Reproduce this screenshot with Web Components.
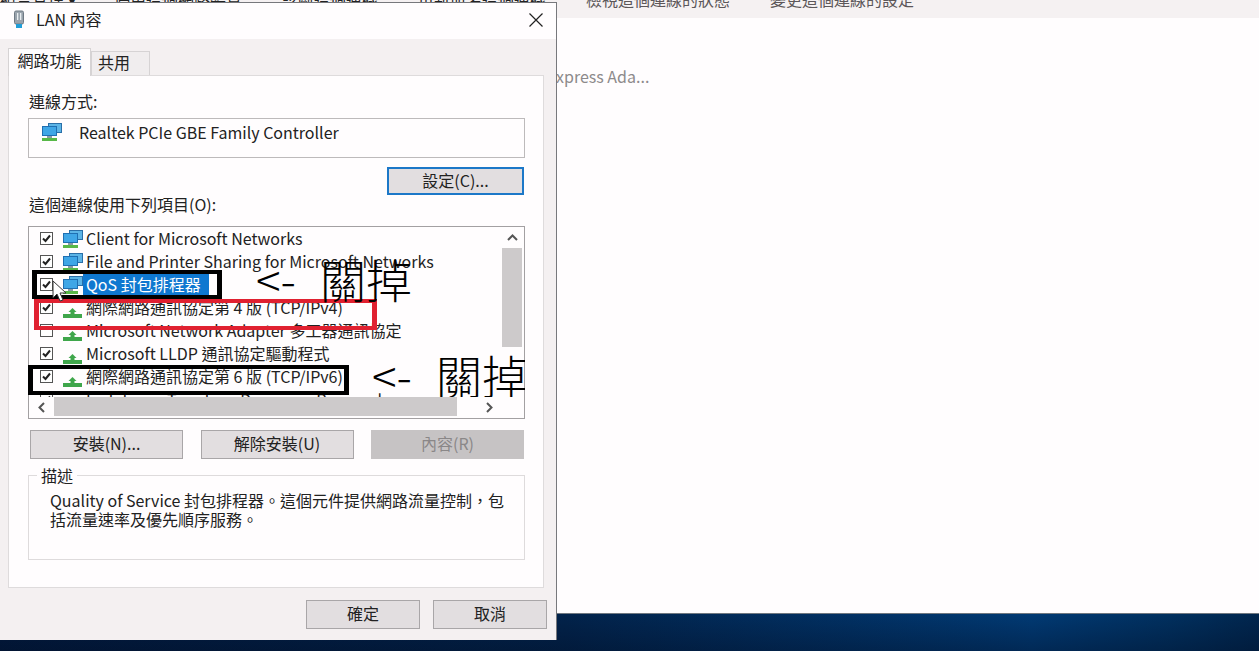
<!DOCTYPE html>
<html lang="zh-Hant">
<head>
<meta charset="utf-8">
<title>LAN 內容</title>
<style>
  html, body { margin: 0; height: 100%; overflow: hidden; background: #fffdfe; }
</style>
</head>
<body>
<net-desktop>
  <net-dialog slot="dialog"></net-dialog>
</net-desktop>
<script>
const FONT = `"Noto Sans CJK TC", "Open Sans", "Noto Sans", sans-serif`;

const monitorIcon = `<svg width="22" height="20" viewBox="0 0 22 20">
  <rect x="7" y="1" width="14" height="10" fill="#2a6fa8"/><rect x="8" y="2" width="12" height="8" fill="#5cb4e6"/>
  <rect x="1" y="4" width="15" height="10" fill="#1f6fb2"/><rect x="2" y="5" width="13" height="8" fill="#3fa6e6"/>
  <rect x="6" y="14" width="5" height="2" fill="#8a9aa5"/><rect x="1" y="16" width="15" height="3" fill="#58b848"/></svg>`;
const protoIcon = `<svg width="22" height="20" viewBox="0 0 22 20">
  <path d="M10.5 10L14.5 14H12.5V16H20V20H1V16H8.5V14H6.5Z" fill="#3fa64b"/></svg>`;

class NetDesktop extends HTMLElement {
  constructor() {
    super();
    this.shadowDOM = this.attachShadow({ mode: "open" });
    this.shadowDOM.innerHTML = `
      <style>
        :host { display: flex; flex-direction: column; width: 1259px; height: 651px; position: relative; overflow: hidden; font-family: ${FONT}; }
        .top { height: 18px; background: #f5f1f2; display: flex; gap: 40px; font-size: 16px; line-height: 16px; color: #5c5759; white-space: nowrap; }
        .top span { margin-top: -9px; }
        .top .left { color: #222; }
        .top .org { width: 74px; }
        .main { flex: 1; background: #fffdfe; padding: 47px 0 0 556px; font-size: 16px; line-height: 22px; color: #8d8a8b; }
        .task { height: 38px; box-sizing: border-box; border-top: 1px solid #6f7780;
          background: linear-gradient(180deg, rgba(0,0,0,0), rgba(0,10,30,.35)), linear-gradient(90deg, #021a3e 0, #02234b 45%, #013a74 82%, #01305f 93%, #01264e 100%); }
        ::slotted(net-dialog) { position: absolute; left: 0; top: 2px; }
      </style>
      <div class="top">
        <span class="left org">組合管理 ▾</span><span class="left">停用這個網路裝置</span><span class="left">診斷這個連線</span><span class="left">重新命名這個連線</span>
        <span>檢視這個連線的狀態</span><span>變更這個連線的設定</span>
      </div>
      <div class="main">xpress Ada...</div>
      <div class="task"></div>
      <slot name="dialog"></slot>`;
  }
}

class NetButton extends HTMLElement {
  constructor() {
    super();
    this.shadowDOM = this.attachShadow({ mode: "open" });
    this.shadowDOM.innerHTML = `
      <style>
        :host { display: flex; align-items: center; justify-content: center; box-sizing: border-box; height: 29px; padding-bottom: 3px; background: #e2dee0; border: 1px solid #a9a6a8; font-size: 16px; color: #222; }
        :host([focused]) { border: 2px solid #1c78c8; height: 28px; }
        :host([disabled]) { background: #c6c3c4; border-color: #c6c3c4; color: #8a8788; }
      </style><slot></slot>`;
  }
}

class NetList extends HTMLElement {
  constructor() {
    super();
    this.shadowDOM = this.attachShadow({ mode: "open" });
    const rows = [
      ["Client for Microsoft Networks", 1, monitorIcon],
      ["File and Printer Sharing for Microsoft Networks", 1, monitorIcon],
      ["QoS 封包排程器", 1, monitorIcon, 1],
      ["網際網路通訊協定第 4 版 (TCP/IPv4)", 1, protoIcon],
      ["Microsoft Network Adapter 多工器通訊協定", 0, protoIcon],
      ["Microsoft LLDP 通訊協定驅動程式", 1, protoIcon],
      ["網際網路通訊協定第 6 版 (TCP/IPv6)", 1, protoIcon],
      ["Link-Layer Topology Discovery Responder", 1, protoIcon],
    ];
    this.shadowDOM.innerHTML = `
      <style>
        :host { display: grid; grid-template-columns: 473px 22px; grid-template-rows: 170px 21px; box-sizing: border-box; height: 193px; border: 1px solid #a3a0a2; background: #fffdfe; font-size: 16px; color: #222; overflow: hidden; }
        .rows { padding-left: 11px; overflow: hidden; }
        .row { display: flex; align-items: center; height: 23px; white-space: nowrap; }
        .box { box-sizing: border-box; width: 13px; height: 13px; border: 1px solid #555; margin-right: 9px; flex: none; display: flex; background: #fff; }
        .row svg { flex: none; }
        .label { margin-left: -1px; padding: 0 8px 2px 3px; line-height: 20px; }
        .sel { background: #0f78d0; color: #fff; }
        .v { display: flex; flex-direction: column; width: 20px; }
        .v .arrow { height: 21px; }
        .thumb { background: #cdcacb; }
        .v .thumb { height: 99px; }
        .h { display: flex; }
        .h .arrow { width: 25px; }
        .h .thumb { width: 403px; margin-bottom: 2px; }
        .h .rest { flex: 1; }
        .arrow { display: flex; align-items: center; justify-content: center; }
      </style>
      <div class="rows">
        ${rows.map(([text, on, icon, sel]) => `
          <div class="row">
            <span class="box">${on ? `<svg width="11" height="11" viewBox="0 0 11 11"><path d="M2 5.5l2.5 2.5L9 2.5" fill="none" stroke="#222" stroke-width="2"/></svg>` : ""}</span>
            ${icon}
            <span class="label ${sel ? "sel" : ""}">${text}</span>
          </div>`).join("")}
      </div>
      <div class="v">
        <div class="arrow"><svg width="11" height="7" viewBox="0 0 11 7"><path d="M1 6l4.5-4.5L10 6" fill="none" stroke="#555" stroke-width="2"/></svg></div>
        <div class="thumb"></div>
      </div>
      <div class="h">
        <div class="arrow"><svg width="7" height="11" viewBox="0 0 7 11"><path d="M6 1L1.5 5.5 6 10" fill="none" stroke="#555" stroke-width="2"/></svg></div>
        <div class="thumb"></div>
        <div class="rest"></div>
        <div class="arrow"><svg width="7" height="11" viewBox="0 0 7 11"><path d="M1 1l4.5 4.5L1 10" fill="none" stroke="#555" stroke-width="2"/></svg></div>
      </div>
      <div></div>`;
  }
}

class NetDialog extends HTMLElement {
  constructor() {
    super();
    this.shadowDOM = this.attachShadow({ mode: "open" });
    this.shadowDOM.innerHTML = `
      <style>
        :host { display: flex; flex-direction: column; box-sizing: border-box; width: 557px; height: 638px; background: #f4f0f1; border-right: 1px solid #77787c; border-top: 1px solid #77787c; font-size: 16px; color: #222; position: relative; }
        .title { height: 36px; box-sizing: border-box; background: #fffdfe; display: flex; align-items: center; padding: 0 13px 2px 12px; font-size: 16px; }
        .title svg.plug { margin-right: 10px; }
        .title .name { flex: 1; margin-top: -2px; }
        .tabs { display: flex; align-items: flex-end; height: 36px; padding-left: 8px; box-sizing: border-box; }
        .tab { box-sizing: border-box; border: 1px solid #d6d3d4; border-bottom: none; display: flex; align-items: center; }
        .tab.on { width: 83px; height: 28px; background: #fffdfe; position: relative; top: 1px; z-index: 1; justify-content: center; padding-bottom: 5px; }
        .tab.off { width: 59px; height: 24px; background: #f0edee; padding: 0 0 3px 6px; }
        .page { box-sizing: border-box; width: 536px; height: 513px; margin-left: 8px; background: #fffdfe; border: 1px solid #dedbdc; padding: 16px 18px 0 19px; display: flex; flex-direction: column; }
        .lbl { line-height: 20px; margin: -1px 0 1px 1px; }
        .conn { box-sizing: border-box; height: 40px; margin-top: 6px; border: 1px solid #bdbabb; display: flex; align-items: flex-start; padding: 3px 0 0 12px; gap: 16px; line-height: 20px; }
        .config { align-self: flex-end; width: 137px; margin: 9px 1px 0 0; }
        net-list { margin-top: 11px; }
        .btns { display: grid; grid-template-columns: repeat(3, 153px); justify-content: space-between; margin-top: 11px; padding: 0 1px 0 2px; }
        fieldset { margin: 8px 0 0; padding: 8px 0 0 21px; height: 83px; border: 1px solid #dedbdc; line-height: 19px; white-space: nowrap; }
        legend { padding: 0 4px; margin-left: -13px; line-height: 16px; }
        .foot { display: flex; justify-content: flex-end; gap: 13px; padding: 12px 9px 0 0; }
        .foot net-button { width: 114px; }
        .cursor { position: absolute; left: 52px; top: 277px; }
      </style>
      <div class="title">
        <svg class="plug" width="14" height="20" viewBox="0 0 14 20"><rect x="2.5" y="1" width="9" height="13" rx="1.5" fill="#9aa4ad" stroke="#6f7a84"/><rect x="5" y="3" width="1.3" height="7" fill="#e9eef1"/><rect x="8" y="3" width="1.3" height="7" fill="#e9eef1"/><path d="M4 14h6v4H4z" fill="#1f9ed8"/></svg>
        <span class="name">LAN 內容</span>
        <svg width="14" height="14" viewBox="0 0 14 14"><path d="M.5.5l13 13M13.5.5l-13 13" stroke="#222" stroke-width="1.2" fill="none"/></svg>
      </div>
      <div class="tabs"><div class="tab on">網路功能</div><div class="tab off">共用</div></div>
      <div class="page">
        <div class="lbl">連線方式:</div>
        <div class="conn">${monitorIcon}<span>Realtek PCIe GBE Family Controller</span></div>
        <net-button class="config" focused>設定(C)...</net-button>
        <div class="lbl">這個連線使用下列項目(O):</div>
        <net-list></net-list>
        <div class="btns">
          <net-button>安裝(N)...</net-button>
          <net-button>解除安裝(U)</net-button>
          <net-button disabled>內容(R)</net-button>
        </div>
        <fieldset><legend>描述</legend>Quality of Service 封包排程器。這個元件提供網路流量控制，包<br>括流量速率及優先順序服務。</fieldset>
      </div>
      <div class="foot"><net-button>確定</net-button><net-button>取消</net-button></div>
      <net-note style="left:32px;top:267px;width:190px;height:29px"></net-note>
      <net-note color="#e02030" style="left:34px;top:296px;width:343px;height:31px"></net-note>
      <net-note style="left:28px;top:362px;width:321px;height:30px"></net-note>
      <net-label style="left:256px;top:249px">&lt;- 關掉</net-label>
      <net-label style="left:372px;top:345px;width:153px;height:49px;overflow:hidden">&lt;- 關掉</net-label>
      <svg class="cursor" width="18" height="24" viewBox="0 0 18 24"><path d="M1 1v17l4-4 3 7 3-1-3-7h6z" fill="#fff" stroke="#333"/></svg>`;
  }
}

// annotation rectangle drawn over the dialog
class NetNote extends HTMLElement {
  constructor() {
    super();
    this.shadowDOM = this.attachShadow({ mode: "open" });
    this.shadowDOM.innerHTML = `
      <style>
        :host { position: absolute; box-sizing: border-box; border: 4px solid var(--c, #000); border-left-width: 5px; border-right-width: 5px; }
      </style>`;
  }
  connectedCallback() {
    if (this.getAttribute("color")) this.style.setProperty("--c", this.getAttribute("color"));
  }
}

class NetLabel extends HTMLElement {
  constructor() {
    super();
    this.shadowDOM = this.attachShadow({ mode: "open" });
    this.shadowDOM.innerHTML = `
      <style>
        :host { position: absolute; font-size: 46px; line-height: 52px; color: #000; white-space: nowrap; font-weight: 200; word-spacing: 14px; }
      </style><slot></slot>`;
  }
}

customElements.define("net-desktop", NetDesktop);
customElements.define("net-button", NetButton);
customElements.define("net-list", NetList);
customElements.define("net-note", NetNote);
customElements.define("net-label", NetLabel);
customElements.define("net-dialog", NetDialog);
</script>
</body>
</html>
